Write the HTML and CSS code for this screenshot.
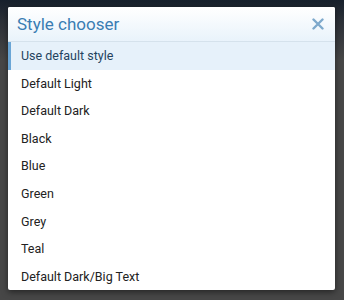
FILE: index.html
```html
<!DOCTYPE html>
<html lang="en">
<head>
  <meta charset="UTF-8">
  <title>Style chooser</title>
  <link rel="stylesheet" href="styles.css">
</head>
<body>

  <div class="dialog">
    <div class="dialog-head">
      <h2>Style chooser</h2>
      <button class="close" type="button" aria-label="Close">
        <svg width="12" height="12" viewBox="0 0 12 12">
          <path d="M1.5 1.5 L10.5 10.5 M10.5 1.5 L1.5 10.5" stroke="#7ea9cc" stroke-width="2.4" stroke-linecap="round"/>
        </svg>
      </button>
    </div>

    <ul class="styles">
      <li class="selected">Use default style</li>
      <li>Default Light</li>
      <li>Default Dark</li>
      <li>Black</li>
      <li>Blue</li>
      <li>Green</li>
      <li>Grey</li>
      <li>Teal</li>
      <li>Default Dark/Big Text</li>
    </ul>
  </div>

</body>
</html>
```

FILE: styles.css
```css
body {
  margin: 0;
  height: 300px;
  overflow: hidden;
  font-family: Roboto, "Liberation Sans", sans-serif;
  background: linear-gradient(180deg, #17202c 0px, #2b3038 20px, #474747 60px, #474747 100%);
  padding: 7px 8px 0 8px;
  box-sizing: border-box;
}
.dialog {
  width: 327px;
  height: 283px;
  background: #fff;
  border-radius: 2px;
  box-shadow: 0 2px 6px rgba(0, 0, 0, 0.5);
  overflow: hidden;
}
.dialog-head {
  height: 34px;
  display: flex;
  align-items: center;
  justify-content: space-between;
  padding: 0 10px 0 9px;
  background: linear-gradient(180deg, #ffffff 0%, #e9f3fb 100%);
  border-bottom: 1px solid #d5e2ec;
}
h2 {
  margin: 0;
  font-size: 17px;
  font-weight: normal;
  color: #3a7db3;
}
.close {
  border: none;
  background: none;
  padding: 0;
  width: 14px;
  height: 14px;
  display: flex;
  align-items: center;
  justify-content: center;
  cursor: pointer;
}
ul.styles {
  list-style: none;
  margin: 0;
  padding: 0;
}
ul.styles li {
  height: 27.6px;
  line-height: 27.6px;
  padding-left: 13px;
  font-size: 12.5px;
  color: #222;
  cursor: pointer;
}
ul.styles li.selected {
  background: #e6f1fa;
  border-left: 3px solid #6aa6d6;
  padding-left: 10px;
  color: #24435e;
}
```
